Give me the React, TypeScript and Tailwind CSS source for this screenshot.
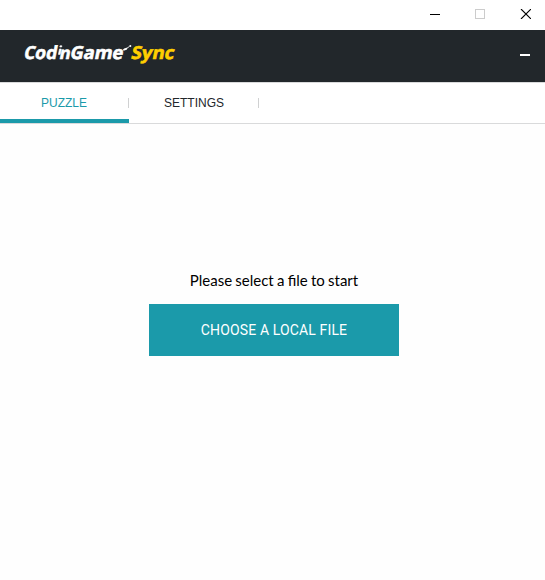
function Logo() {
  return (
    <svg width="170" height="34" viewBox="0 0 170 34" className="block" role="img" aria-label="CodinGame Sync">
      <g
        transform="translate(3 0) skewX(-11)"
        fontFamily="'Open Sans', 'Noto Sans', sans-serif"
        fontWeight="700"
        fontSize="18"
        strokeWidth="0.6"
      >
        <g fill="#fff" stroke="#fff">
          <text x="2.8" y="18.4" textLength="33" lengthAdjust="spacingAndGlyphs">Cod</text>
          <rect x="37" y="8" width="1.8" height="5.4" />
          <rect x="37" y="4.8" width="1.8" height="1.2" />
          <text x="38.4" y="18.4" fontSize="17" textLength="11" lengthAdjust="spacingAndGlyphs">n</text>
          <text x="49" y="18.4" textLength="53" lengthAdjust="spacingAndGlyphs">Game</text>
        </g>
        <text x="110" y="18.4" fill="#ffcf00" stroke="#ffcf00" textLength="43" lengthAdjust="spacingAndGlyphs">Sync</text>
      </g>
      <path d="M101 9.6 L103.2 7.4 L106.3 6.6 L106 8.6 L103.5 9.4 Z" fill="#fff" />
      <path d="M105.5 7.6 L108.5 5.4" stroke="#fff" strokeWidth="0.9" />
      <circle cx="109.3" cy="4.9" r="1" fill="#fff" />
    </svg>
  );
}

function WindowBar() {
  return (
    <div className="flex h-[30px] items-start justify-end gap-[35px] bg-white pt-[9px] pr-[14px]">
      <svg width="10" height="10" shapeRendering="crispEdges"><path d="M0 5.5H10" stroke="#000" /></svg>
      <svg width="10" height="10" shapeRendering="crispEdges"><rect x=".5" y=".5" width="9" height="9" fill="none" stroke="#ccc" /></svg>
      <svg width="11" height="10" viewBox="0 0 11 10"><path d="M1 0L11 10M11 0L1 10" stroke="#000" strokeWidth="1.1" /></svg>
    </div>
  );
}

export default function App() {
  return (
    <div className="flex h-[580px] w-[545px] flex-col overflow-hidden bg-white font-['Liberation_Sans',Arial,sans-serif]">
      <WindowBar />
      <header className="flex h-[52px] items-start justify-between bg-[#22272b] pt-[11px] pr-[15px] pl-[21px]">
        <Logo />
        <span className="mt-[13px] h-[2px] w-[10px] bg-white" />
      </header>
      <nav className="flex h-[42px] border-y border-[#d9dadb] text-[12px]">
        <div className="flex w-[129px] items-start justify-between border-b-4 border-[#1b9aaa]">
          <span className="pt-[11px] pl-[41px] leading-[18px] text-[#1b9aaa]">PUZZLE</span>
          <span className="mt-[15px] h-[10px] w-px bg-[#d0d1d2]" />
        </div>
        <div className="flex w-[130px] items-start justify-between">
          <span className="pt-[11px] pl-[35px] leading-[18px] text-[#22272b]">SETTINGS</span>
          <span className="mt-[15px] h-[10px] w-px bg-[#d0d1d2]" />
        </div>
      </nav>
      <main className="flex flex-1 flex-col items-center bg-[#fefefe] pt-[145px] pl-[3px]">
        <p className="font-[Lato,sans-serif] text-[15px] leading-[22px] text-black [word-spacing:-0.6px]">Please select a file to start</p>
        <button className="mt-[13px] h-[52px] w-[250px] bg-[#1b9aaa] font-[Roboto,sans-serif] text-[14px] tracking-[0.14px] text-white">CHOOSE A LOCAL FILE</button>
      </main>
    </div>
  );
}
